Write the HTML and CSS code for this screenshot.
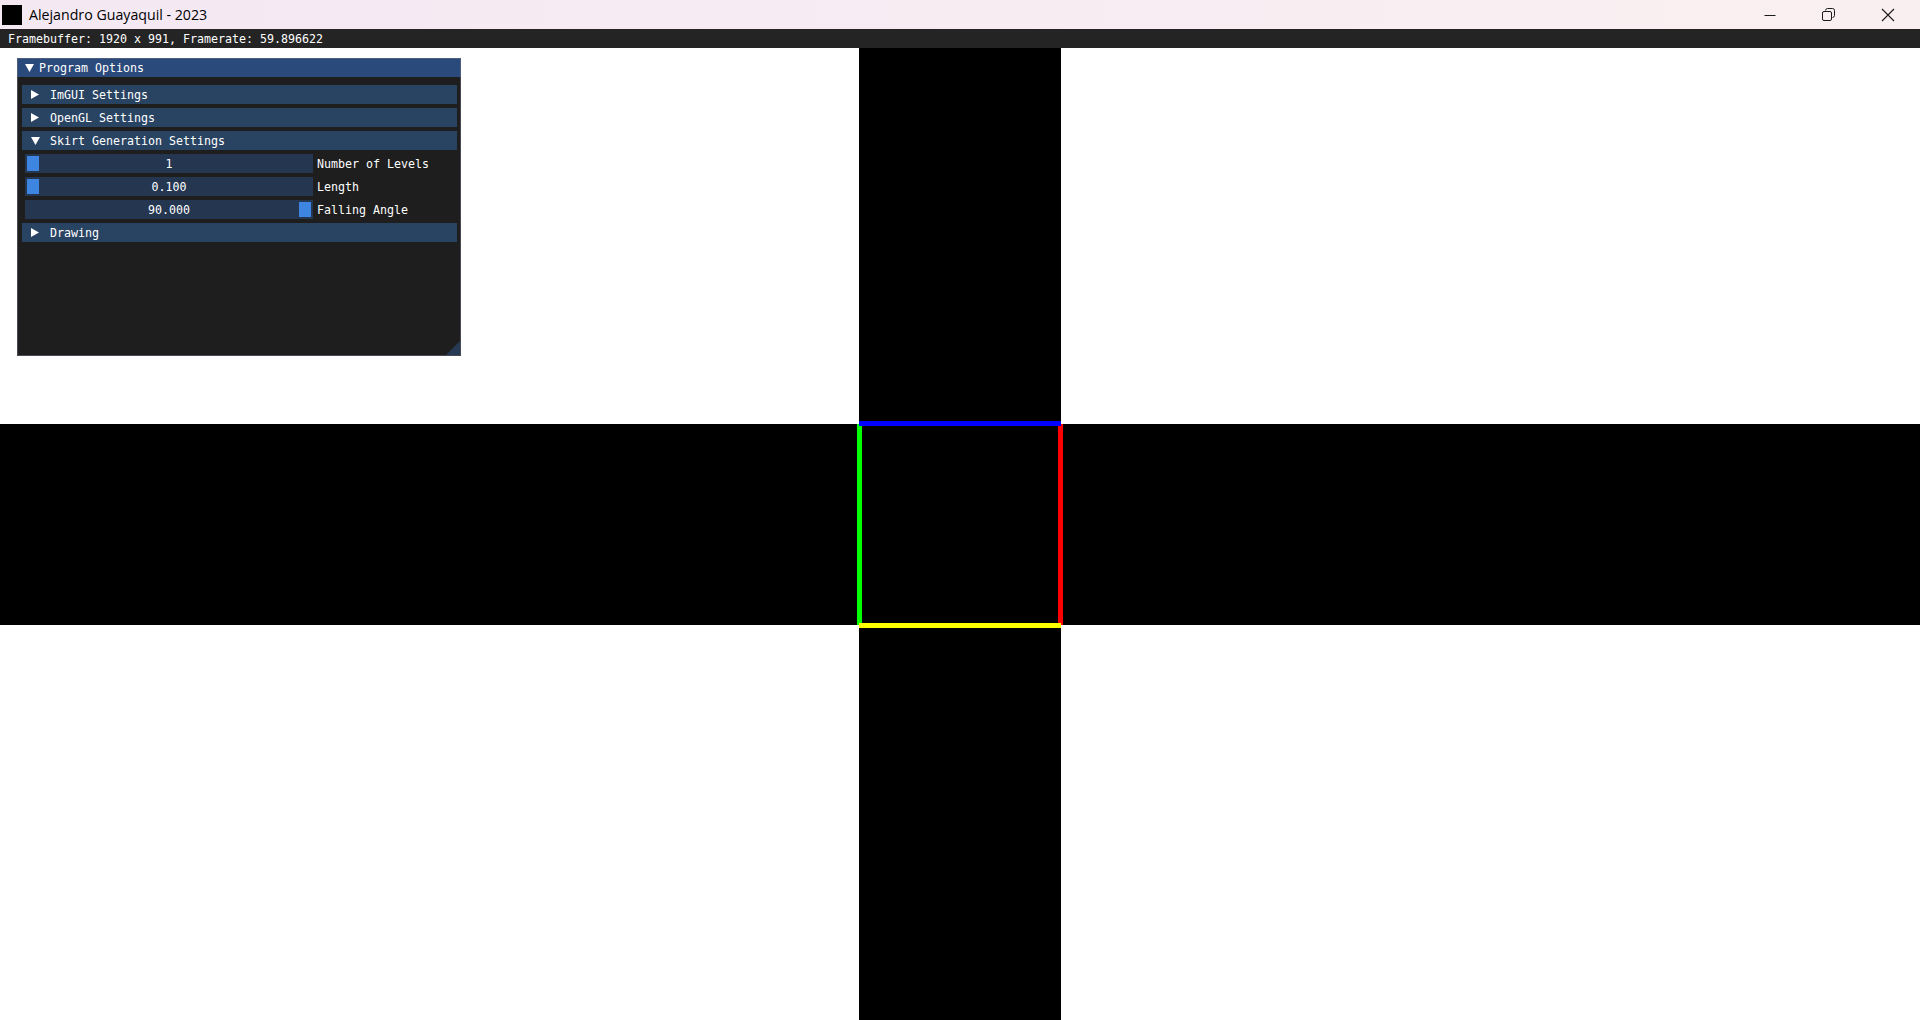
FILE: index.html
```html
<!DOCTYPE html>
<html>
<head>
<meta charset="utf-8">
<title>Alejandro Guayaquil - 2023</title>
<link rel="stylesheet" href="styles.css">
</head>
<body>
<div class="titlebar">
  <div class="app-icon"></div>
  <div class="app-title">Alejandro Guayaquil - 2023</div>
  <div class="controls">
    <div class="ctl">
      <svg width="12" height="12" viewBox="0 0 12 12"><line x1="0.5" y1="6.5" x2="11.5" y2="6.5" stroke="#1a1a1a" stroke-width="1"/></svg>
    </div>
    <div class="ctl">
      <svg width="14" height="14" viewBox="0 0 14 14"><path d="M3.5 2.5 Q3.8 0.5 5.5 0.5 H10.5 Q12.5 0.5 12.5 2.5 V7.5 Q12.5 9.2 10.5 9.5" fill="none" stroke="#1a1a1a" stroke-width="1"/><rect x="0.5" y="3.5" width="9" height="9" rx="1.5" fill="none" stroke="#1a1a1a" stroke-width="1"/></svg>
    </div>
    <div class="ctl">
      <svg width="14" height="14" viewBox="0 0 14 14"><path d="M1 1 L13 13 M13 1 L1 13" stroke="#1a1a1a" stroke-width="1.1"/></svg>
    </div>
  </div>
</div>
<div class="client">
  <svg class="scene" width="1920" height="991" viewBox="0 0 1920 991">
    <rect x="0" y="0" width="1920" height="991" fill="#ffffff"/>
    <rect x="859" y="0" width="202" height="991" fill="#000000"/>
    <rect x="0" y="395" width="1920" height="201" fill="#000000"/>
    <rect x="857" y="395" width="5" height="201" fill="#00ff00"/>
    <rect x="1058" y="395" width="5" height="201" fill="#ff0000"/>
    <rect x="859" y="392" width="202" height="5" fill="#0000ff"/>
    <rect x="859" y="594" width="202" height="5" fill="#ffff00"/>
  </svg>
  <div class="fpsbar">Framebuffer: 1920 x 991, Framerate: 59.896622</div>
  <div class="imwin">
    <div class="imwin-title">
      <svg class="arrow-down" width="9" height="8" viewBox="0 0 9 8"><polygon points="0,0 9,0 4.5,8" fill="#ffffff"/></svg>
      <span>Program Options</span>
    </div>
    <div class="imwin-body">
      <div class="header">
        <svg class="arrow-right" width="8" height="9" viewBox="0 0 8 9"><polygon points="0,0 8,4.5 0,9" fill="#ffffff"/></svg>
        <span>ImGUI Settings</span>
      </div>
      <div class="header">
        <svg class="arrow-right" width="8" height="9" viewBox="0 0 8 9"><polygon points="0,0 8,4.5 0,9" fill="#ffffff"/></svg>
        <span>OpenGL Settings</span>
      </div>
      <div class="header">
        <svg class="arrow-down" width="9" height="8" viewBox="0 0 9 8"><polygon points="0,0 9,0 4.5,8" fill="#ffffff"/></svg>
        <span>Skirt Generation Settings</span>
      </div>
      <div class="slider-row">
        <div class="slider"><div class="grab at-min"></div><span class="val">1</span></div>
        <span class="label">Number of Levels</span>
      </div>
      <div class="slider-row">
        <div class="slider"><div class="grab at-min"></div><span class="val">0.100</span></div>
        <span class="label">Length</span>
      </div>
      <div class="slider-row">
        <div class="slider"><div class="grab at-max"></div><span class="val">90.000</span></div>
        <span class="label">Falling Angle</span>
      </div>
      <div class="header">
        <svg class="arrow-right" width="8" height="9" viewBox="0 0 8 9"><polygon points="0,0 8,4.5 0,9" fill="#ffffff"/></svg>
        <span>Drawing</span>
      </div>
    </div>
    <svg class="grip" width="14" height="14" viewBox="0 0 14 14"><polygon points="14,0 14,14 0,14" fill="#263a55"/></svg>
  </div>
</div>
</body>
</html>
```

FILE: styles.css
```css
html, body {
  margin: 0;
  padding: 0;
  width: 1920px;
  height: 1020px;
  overflow: hidden;
  background: #ffffff;
}

.titlebar {
  height: 29px;
  display: flex;
  align-items: center;
  background: linear-gradient(90deg, #f4e9f3 0%, #f7ecf2 50%, #faeff0 100%);
  font-family: "Open Sans", "Noto Sans", sans-serif;
}

.app-icon {
  width: 20px;
  height: 20px;
  background: #000000;
  margin-left: 2px;
}

.app-title {
  margin-left: 7px;
  font-size: 14.2px;
  color: #000000;
  line-height: 29px;
}

.controls {
  margin-left: auto;
  display: flex;
  height: 29px;
  margin-right: 3px;
}

.ctl {
  width: 59px;
  height: 29px;
  display: flex;
  align-items: center;
  justify-content: center;
}

.client {
  position: relative;
  width: 1920px;
  height: 991px;
}

.scene {
  display: block;
}

.fpsbar {
  position: absolute;
  left: 0;
  top: 0;
  width: 1920px;
  height: 19px;
  background: #242424;
  color: #ffffff;
  font-family: "DejaVu Sans Mono", "Liberation Mono", monospace;
  font-size: 11.63px;
  line-height: 17px;
  padding: 2px 0 0 8px;
  box-sizing: border-box;
  white-space: nowrap;
}

.imwin {
  position: absolute;
  left: 17px;
  top: 29px;
  width: 444px;
  height: 298px;
  background: #1e1e1e;
  font-family: "DejaVu Sans Mono", "Liberation Mono", monospace;
  font-size: 11.63px;
  color: #ffffff;
  white-space: nowrap;
}

.imwin span {
  padding-top: 2px;
  line-height: 17px;
}

.imwin::after {
  content: "";
  position: absolute;
  inset: 0;
  border: 1px solid rgba(110, 110, 128, 0.55);
  pointer-events: none;
}

.imwin-title {
  height: 19px;
  background: #294a7a;
  display: flex;
  align-items: center;
}

.imwin-title .arrow-down {
  margin-left: 8px;
  margin-right: 5px;
}

.imwin-body {
  padding: 8px 4px 0 5px;
  display: flex;
  flex-direction: column;
  gap: 4px;
}

.header {
  height: 19px;
  background: #294362;
  display: flex;
  align-items: center;
}

.header .arrow-right {
  margin-left: 9px;
  margin-right: 11px;
}

.header .arrow-down {
  margin-left: 9px;
  margin-right: 10px;
}

.slider-row {
  display: flex;
  align-items: center;
  height: 19px;
  padding-left: 3px;
  gap: 4px;
}

.slider {
  position: relative;
  width: 288px;
  height: 19px;
  background: #243650;
  display: flex;
  align-items: center;
  justify-content: center;
}

.grab {
  position: absolute;
  top: 2px;
  width: 12px;
  height: 15px;
  background: #3d85e0;
}

.grab.at-min { left: 2px; }
.grab.at-max { right: 2px; }

.val {
  position: relative;
}

.grip {
  position: absolute;
  right: 1px;
  bottom: 1px;
}
```
